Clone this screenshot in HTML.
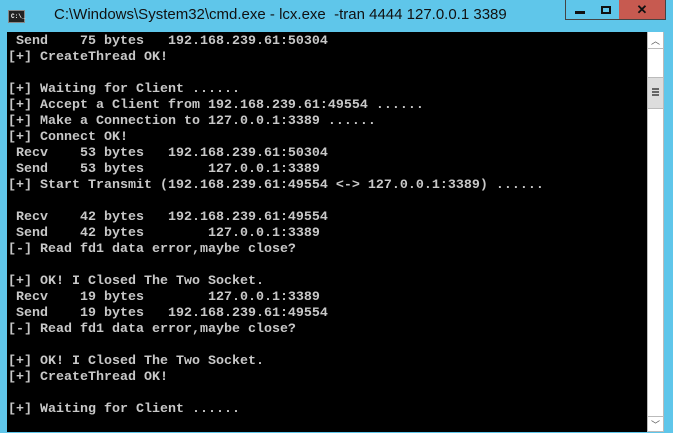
<!DOCTYPE html><html><head><style>
body{margin:0;width:673px;height:432px;background:#5fc6ea;position:relative;overflow:hidden;font-family:"Liberation Sans",sans-serif}
.t{position:absolute;left:54px;top:6px;font-size:15px;color:#111}
.ic{position:absolute;left:8px;top:10px;width:15px;height:11px;background:#222;border:1px solid #888}
.ic span{position:absolute;left:2px;top:2px;font:bold 6px "Liberation Mono",monospace;color:#fff}
.b{position:absolute;top:0;height:20px;border:1px solid #444;border-top:none;box-sizing:border-box}
.con{position:absolute;left:7px;top:32px;width:640px;height:400px;background:#000}
pre{margin:0;position:absolute;left:1px;top:2px;font:13.33px/16px "Liberation Mono",monospace;color:#c8c8c8;font-weight:bold;letter-spacing:0}
.sb{position:absolute;left:647px;top:32px;width:17px;height:400px;background:#fff;border-left:1px solid #bbb;border-right:1px solid #bbb;box-sizing:border-box}
</style></head><body>
<div class="ic"><span>C:\_</span></div>
<div class="t">C:\Windows\System32\cmd.exe - lcx.exe &nbsp;-tran 4444 127.0.0.1 3389</div>
<div class="b" style="left:565px;width:29px;background:#5fc6ea"><div style="position:absolute;left:9px;top:11px;width:10px;height:3px;background:#111"></div></div>
<div class="b" style="left:593px;width:27px;background:#5fc6ea;border-left:none"><div style="position:absolute;left:8px;top:6px;width:6px;height:4px;border:2px solid #111"></div></div>
<div class="b" style="left:619px;width:47px;background:#c75a50;border-left:none;color:#111;font:bold 13px 'Liberation Sans';text-align:center;line-height:20px">✕</div>
<div class="con"><pre> Send    75 bytes   192.168.239.61:50304
[+] CreateThread OK!

[+] Waiting for Client ......
[+] Accept a Client from 192.168.239.61:49554 ......
[+] Make a Connection to 127.0.0.1:3389 ......
[+] Connect OK!
 Recv    53 bytes   192.168.239.61:50304
 Send    53 bytes        127.0.0.1:3389
[+] Start Transmit (192.168.239.61:49554 &lt;-&gt; 127.0.0.1:3389) ......

 Recv    42 bytes   192.168.239.61:49554
 Send    42 bytes        127.0.0.1:3389
[-] Read fd1 data error,maybe close?

[+] OK! I Closed The Two Socket.
 Recv    19 bytes        127.0.0.1:3389
 Send    19 bytes   192.168.239.61:49554
[-] Read fd1 data error,maybe close?

[+] OK! I Closed The Two Socket.
[+] CreateThread OK!

[+] Waiting for Client ......</pre></div>
<div class="sb">
<div style="position:absolute;left:0;top:0;width:15px;height:16px;border-bottom:1px solid #bbb;text-align:center;font-size:9px;color:#555;line-height:18px">︿</div>
<div style="position:absolute;left:0;top:45px;width:15px;height:30px;background:#ddd;border-top:1px solid #bbb;border-bottom:1px solid #bbb">
<div style="position:absolute;left:4px;top:10px;width:7px;height:2px;background:#666;box-shadow:0 3px #666,0 6px #666"></div></div>
<div style="position:absolute;left:0;top:384px;width:15px;height:16px;border-top:1px solid #bbb;border-bottom:1px solid #bbb;box-sizing:border-box;text-align:center;font-size:9px;color:#555;line-height:16px">﹀</div>
</div>
</body></html>
